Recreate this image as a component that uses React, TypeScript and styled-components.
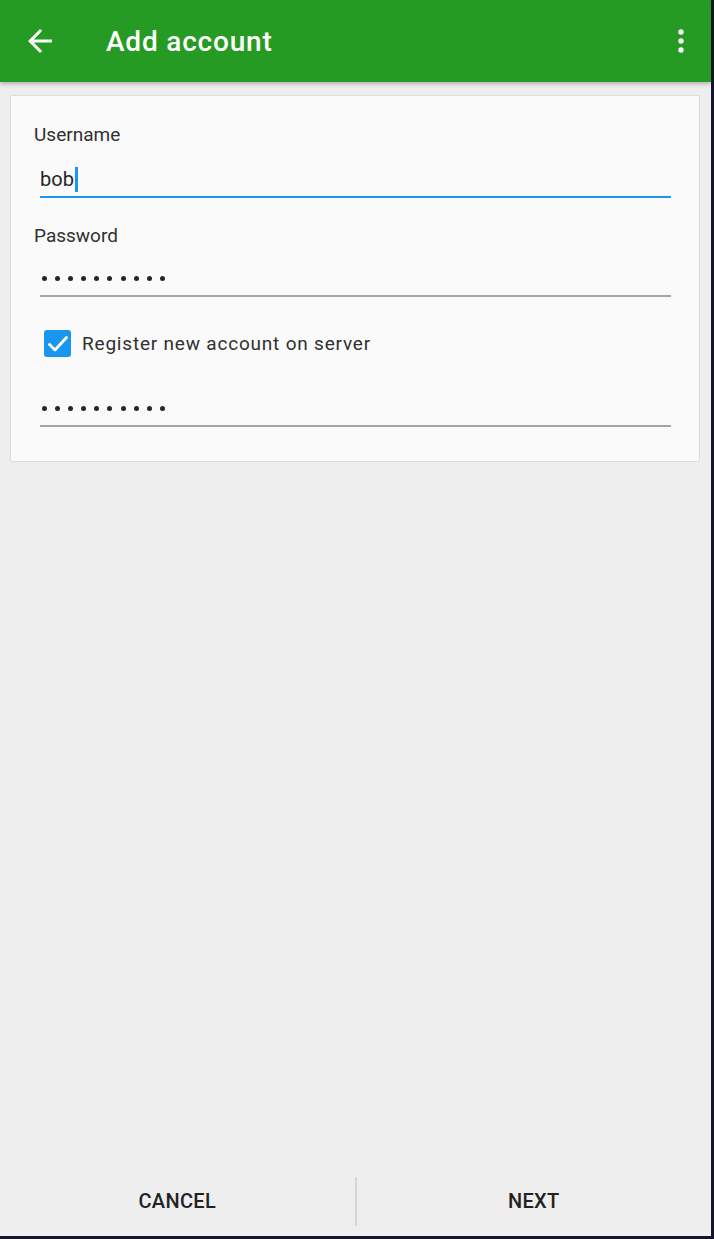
import React from 'react'
import styled, { createGlobalStyle } from 'styled-components'

const GlobalStyle = createGlobalStyle`
    html, body {
        margin: 0;
        padding: 0;
        background: #14142a;
    }
    * {
        box-sizing: border-box;
    }
`

const Frame = styled.div`
    width: 714px;
    height: 1239px;
    background: #14142a;
    padding: 0 3px 3px 0;
`

const Screen = styled.div`
    width: 711px;
    height: 1236px;
    display: flex;
    flex-direction: column;
    background: #eeeeee;
    font-family: Roboto, 'Liberation Sans', sans-serif;
    color: #212121;
`

const AppBar = styled.header`
    height: 82px;
    flex-shrink: 0;
    background: #259b24;
    display: flex;
    align-items: center;
    padding: 0 12px 0 22px;
    color: #fff;
    box-shadow: 0 2px 4px rgba(0, 0, 0, 0.25);
    position: relative;
    z-index: 1;
`

const IconButton = styled.div`
    display: flex;
    align-items: center;
    justify-content: center;
    width: 36px;
    height: 36px;
`

const Title = styled.h1`
    flex: 1;
    margin: 0 0 0 48px;
    font-size: 28px;
    font-weight: 500;
    letter-spacing: 0.8px;
`

const Body = styled.main`
    flex: 1;
    padding: 13px 11px 0 10px;
`

const Card = styled.section`
    background: #fafafa;
    border: 1px solid #dcdcdc;
    border-radius: 2px;
    padding: 27px 28px 34px 23px;
`

const Label = styled.div<{ $gap?: number }>`
    font-size: 19px;
    line-height: 24px;
    color: #303030;
    margin-top: ${p => p.$gap ?? 0}px;
`

const Field = styled.div<{ $gap: number; $focused?: boolean }>`
    margin: ${p => p.$gap}px 0 0 6px;
    padding: 0 0 5px 0;
    border-bottom: 2px solid ${p => (p.$focused ? '#1b96ee' : '#a4a4a4')};
    font-size: 20px;
    line-height: 24px;
    height: 31px;
    color: #262626;
    display: flex;
    align-items: center;
`

const Caret = styled.span`
    display: inline-block;
    width: 3px;
    height: 25px;
    background: #1b96ee;
    margin-left: 1px;
`

const Dots = styled.span`
    display: flex;
    gap: 8.1px;
    padding-left: 2px;
`

const Dot = styled.span`
    width: 5px;
    height: 5px;
    border-radius: 50%;
    background: #262626;
`

const CheckRow = styled.label`
    margin: 33px 0 0 10px;
    display: flex;
    align-items: center;
    gap: 11px;
    font-size: 19px;
    letter-spacing: 0.8px;
    color: #303030;
    height: 27px;
`

const CheckBox = styled.span`
    width: 27px;
    height: 27px;
    border-radius: 3px;
    background: #1b96ee;
    display: flex;
    align-items: center;
    justify-content: center;
`

const Footer = styled.footer`
    height: 72px;
    flex-shrink: 0;
    display: flex;
    align-items: center;
    padding-top: 2px;
`

const FooterButton = styled.button`
    flex: 1;
    height: 100%;
    border: 0;
    background: transparent;
    font-family: Roboto, 'Liberation Sans', sans-serif;
    font-size: 20px;
    font-weight: 500;
    letter-spacing: 0.3px;
    color: #222;
    padding: 0;
`

const Divider = styled.span`
    width: 2px;
    height: 49px;
    background: #d6d6d6;
`

const Password = ({ count }: { count: number }) => (
    <Dots>
        {Array.from({ length: count }).map((_, k) => <Dot key={k} />)}
    </Dots>
)

export default function App() {
    return (
        <>
            <GlobalStyle />
            <Frame>
                <Screen>
                    <AppBar>
                        <IconButton>
                            <svg width="36" height="36" viewBox="0 0 24 24" fill="#fff">
                                <path d="M20 11H7.83l5.59-5.59L12 4l-8 8 8 8 1.41-1.41L7.83 13H20v-2z" />
                            </svg>
                        </IconButton>
                        <Title>Add account</Title>
                        <IconButton>
                            <svg width="36" height="36" viewBox="0 0 36 36" fill="#fff">
                                <circle cx="18" cy="9" r="2.7" />
                                <circle cx="18" cy="18" r="2.7" />
                                <circle cx="18" cy="27" r="2.7" />
                            </svg>
                        </IconButton>
                    </AppBar>
                    <Body>
                        <Card>
                            <Label>Username</Label>
                            <Field $gap={20} $focused>
                                bob<Caret />
                            </Field>
                            <Label $gap={26}>Password</Label>
                            <Field $gap={18}>
                                <Password count={10} />
                            </Field>
                            <CheckRow>
                                <CheckBox>
                                    <svg width="24" height="24" viewBox="0 0 24 24" fill="none" stroke="#fff" strokeWidth="2.8" strokeLinecap="round" strokeLinejoin="round">
                                        <path d="M3.5 12.5l5.5 5.5L20.5 5.5" />
                                    </svg>
                                </CheckBox>
                                Register new account on server
                            </CheckRow>
                            <Field $gap={39}>
                                <Password count={10} />
                            </Field>
                        </Card>
                    </Body>
                    <Footer>
                        <FooterButton>CANCEL</FooterButton>
                        <Divider />
                        <FooterButton>NEXT</FooterButton>
                    </Footer>
                </Screen>
            </Frame>
        </>
    )
}
